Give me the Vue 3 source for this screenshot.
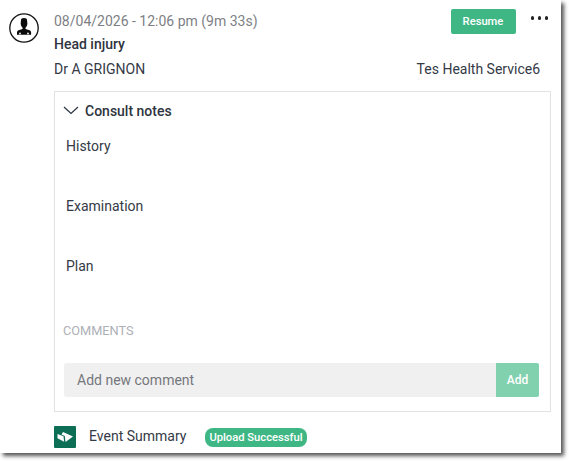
<template>
  <div class="page">
    <div class="panel">
      <div class="avatar">
        <svg viewBox="0 0 30 30" width="30" height="30">
          <circle cx="15" cy="15" r="14.2" fill="#fff" stroke="#111" stroke-width="1.3" />
          <path d="M12 7c0-1.200 1.200-1.900 3-1.900s3 .7 3 1.900l.4 3.500c0 1.800-1 3.400-1.900 4.200v1.300l4 1.300c1.100.4 1.600 1.200 1.600 2.300v2.100H8v-2.100c0-1.100.5-1.900 1.600-2.300l4-1.300v-1.300c-.9-.8-1.900-2.400-1.900-4.200z" fill="#0b0b0b" />
          <circle cx="11" cy="20.500" r=".9" fill="#fff" />
          <circle cx="19" cy="20.500" r=".9" fill="#fff" />
        </svg>
      </div>
      <div class="main">
        <div class="head">
          <div class="date">08/04/2026 - 12:06 pm (9m 33s)</div>
          <div class="actions">
            <button class="resume">Resume</button>
            <span class="dots"><i></i><i></i><i></i></span>
          </div>
        </div>
        <div class="title">Head injury</div>
        <div class="meta">
          <span>Dr A GRIGNON</span>
          <span>Tes Health Service6</span>
        </div>
        <section class="card">
          <div class="card-head">
            <svg class="chev" viewBox="0 0 16 9" width="16" height="9">
              <path d="M1 1l7 6.500L15 1" fill="none" stroke="#2b3440" stroke-width="1.200" />
            </svg>
            <span>Consult notes</span>
          </div>
          <div class="notes">
            <div v-for="n in notes" :key="n" class="note">{{ n }}</div>
          </div>
          <div class="comments">COMMENTS</div>
          <div class="add-row">
            <div class="input">Add new comment</div>
            <button class="add">Add</button>
          </div>
        </section>
        <div class="footer">
          <span class="logo">
            <svg viewBox="0 0 22 22" width="22" height="22">
              <path d="M3.500 8l6 2.200.6 5.500-6.600-3.500z M9 6l10 4.500-7.500 5.500-.7-6-3.300-1.500z" fill="#fff" />
            </svg>
          </span>
          <span class="summary">Event Summary</span>
          <span class="badge">Upload Successful</span>
        </div>
      </div>
    </div>
  </div>
</template>

<script setup>
const notes = ['History', 'Examination', 'Plan']
</script>

<style>
html, body { margin: 0; background: #fff; }
</style>

<style scoped>
.page { width: 569px; height: 461px; overflow: hidden; }
.panel {
  width: 561px;
  height: 453px;
  box-sizing: border-box;
  background: #fff;
  box-shadow: 3px 3px 4px #555;
  display: flex;
  padding: 9px 10px 0 9px;
  font-family: Roboto, "Liberation Sans", sans-serif;
  font-size: 14px;
  color: #343a46;
}
.avatar { width: 30px; height: 30px; margin-top: 4px; margin-right: 15px; flex: none; }
.avatar svg { display: block; }
.main { flex: 1; min-width: 0; }
.head { display: flex; justify-content: space-between; height: 25px; }
.date { color: #7d7f85; padding-top: 4px; line-height: 16px; }
.actions { display: flex; align-items: flex-start; }
.resume {
  width: 65px; height: 25px; padding: 0; border: 0; border-radius: 2px;
  background: #3fb785; color: #fff;
  font: 500 11.200px Roboto, sans-serif;
}
.dots { display: flex; gap: 3.500px; margin: 7px 3px 0 15px; }
.dots i { width: 3.500px; height: 3.500px; border-radius: 50%; background: #222; }
.title { font-weight: 500; font-size: 14px; line-height: 16px; margin-top: 2px; color: #2e3440; }
.meta {
  display: flex; justify-content: space-between; line-height: 16px;
  margin-top: 9px; padding-right: 11px;
}
.card {
  margin-top: 14px; height: 321px; box-sizing: border-box;
  border: 1px solid #e2e2e2;
}
.card-head {
  display: flex; align-items: center; height: 38px;
  padding-left: 8px; font-weight: 500; color: #2e3440;
}
.chev { margin-right: 6px; margin-top: -2px; }
.notes { padding-left: 11px; padding-top: 1px; }
.note { height: 60px; line-height: 16px; margin-top: 7px; margin-bottom: -7px; }
.comments { margin: 13px 0 0 8px; font-size: 12.750px; line-height: 14px; color: #adb0b6; }
.add-row { display: flex; margin: 25px 11px 0 9px; height: 34px; }
.input {
  flex: 1; background: #f0f0f0; color: #75777c; line-height: 34px;
  padding-left: 13px; border-radius: 2px 0 0 2px;
}
.add {
  width: 43px; padding: 0; border: 0; border-radius: 0 2px 2px 0;
  background: #81d0ae; color: #fff; font: 500 12px Roboto, sans-serif;
}
.footer { display: flex; align-items: center; margin-top: 14px; height: 22px; }
.logo { width: 22px; height: 22px; border-radius: 1px; background: #0c6e55; flex: none; }
.logo svg { display: block; }
.summary { margin-left: 13px; margin-bottom: 2px; }
.badge {
  margin-left: 19px; height: 19px; line-height: 19px; padding: 0 4px;
  border-radius: 8px; background: #3fb785; color: #fff;
  font-size: 11.200px; font-weight: 500;
}
</style>
